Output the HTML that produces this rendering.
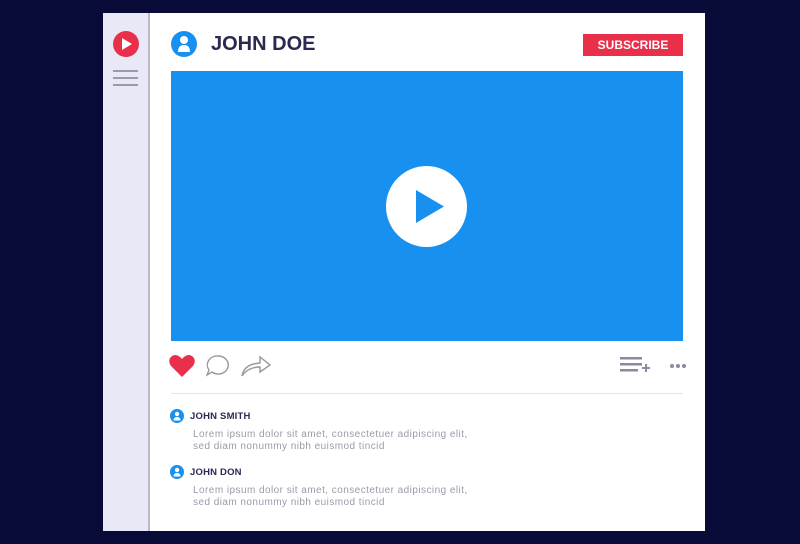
<!DOCTYPE html>
<html><head><style>
body{margin:0;width:800px;height:544px;background:#080a38;position:relative;overflow:hidden;font-family:"Liberation Sans",sans-serif}
.panel{position:absolute;left:103px;top:13px;width:602px;height:518px;background:#fff}
.side{position:absolute;left:103px;top:13px;width:45px;height:518px;background:#e9e8f6;border-right:2px solid #b9b8cc}
.abs{position:absolute}
.name{font-weight:bold;color:#2a2a50;}
.lorem{font-size:10px;color:#9a9aaa;line-height:12px;letter-spacing:0.45px}
</style></head><body>
<div class="panel"></div>
<div class="side"></div>
<svg class="abs" style="left:112px;top:30px" width="28" height="28"><circle cx="14" cy="14" r="13" fill="#e8304a"/><path d="M10 8 L20 14 L10 20Z" fill="#fff"/></svg>
<div class="abs" style="left:113px;top:70px;width:25px;height:2px;background:#9a9ab0;box-shadow:0 7px 0 #9a9ab0,0 14px 0 #9a9ab0"></div>
<svg class="abs" style="left:170px;top:30px" width="28" height="28"><circle cx="14" cy="14" r="13" fill="#1890f0"/><circle cx="14" cy="10" r="4" fill="#fff"/><path d="M8 22 Q8 15 14 15 Q20 15 20 22Z" fill="#fff"/></svg>
<div class="abs name" style="left:211px;top:33px;font-size:20px">JOHN DOE</div>
<div class="abs" style="left:583px;top:34px;width:100px;height:22px;background:#e8304a;color:#fff;font-weight:bold;font-size:12px;line-height:22px;text-align:center">SUBSCRIBE</div>
<div class="abs" style="left:171px;top:71px;width:512px;height:270px;background:#1890f0"></div>
<svg class="abs" style="left:386px;top:166px" width="81" height="81"><circle cx="40.5" cy="40.5" r="40.5" fill="#fff"/><path d="M30 24 L58 40.5 L30 57Z" fill="#1890f0"/></svg>
<svg class="abs" style="left:168px;top:352px" width="110" height="28"><path d="M14 25 L3 14 Q-1 8 4 4 Q9 1 14 7 Q19 1 24 4 Q29 8 25 14Z" fill="#e8304a"/><path d="M50 4 a10 9 0 1 1 -6 16 l-5 3 l2 -5 a10 9 0 0 1 9 -14z" fill="none" stroke="#999" stroke-width="1.4"/><path d="M74 24 Q76 12 92 11 V5 L102 13 L92 20 V15 Q80 15 74 24Z" fill="none" stroke="#999" stroke-width="1.4"/></svg>
<svg class="abs" style="left:620px;top:355px" width="66" height="22"><g fill="#8a8aa0"><rect x="0" y="2" width="22" height="2.5"/><rect x="0" y="8" width="22" height="2.5"/><rect x="0" y="14" width="18" height="2.5"/><rect x="22" y="12" width="8" height="2"/><rect x="25" y="9" width="2" height="8"/><circle cx="52" cy="11" r="2"/><circle cx="58" cy="11" r="2"/><circle cx="64" cy="11" r="2"/></g></svg>
<div class="abs" style="left:171px;top:393px;width:512px;height:1px;background:#e4e6ee"></div>
<svg class="abs" style="left:170px;top:409px" width="14" height="14"><circle cx="7" cy="7" r="7" fill="#1890f0"/><circle cx="7" cy="5" r="2.2" fill="#fff"/><path d="M3.5 11.5 Q3.5 8 7 8 Q10.5 8 10.5 11.5Z" fill="#fff"/></svg>
<div class="abs name" style="left:190px;top:411px;font-size:9.5px;letter-spacing:0.2px">JOHN SMITH</div>
<div class="abs lorem" style="left:193px;top:429px">Lorem ipsum dolor sit amet, consectetuer adipiscing elit,<br>sed diam nonummy nibh euismod tincid</div>
<svg class="abs" style="left:170px;top:465px" width="14" height="14"><circle cx="7" cy="7" r="7" fill="#1890f0"/><circle cx="7" cy="5" r="2.2" fill="#fff"/><path d="M3.5 11.5 Q3.5 8 7 8 Q10.5 8 10.5 11.5Z" fill="#fff"/></svg>
<div class="abs name" style="left:190px;top:467px;font-size:9.5px;letter-spacing:0.2px">JOHN DON</div>
<div class="abs lorem" style="left:193px;top:485px">Lorem ipsum dolor sit amet, consectetuer adipiscing elit,<br>sed diam nonummy nibh euismod tincid</div>
</body></html>
